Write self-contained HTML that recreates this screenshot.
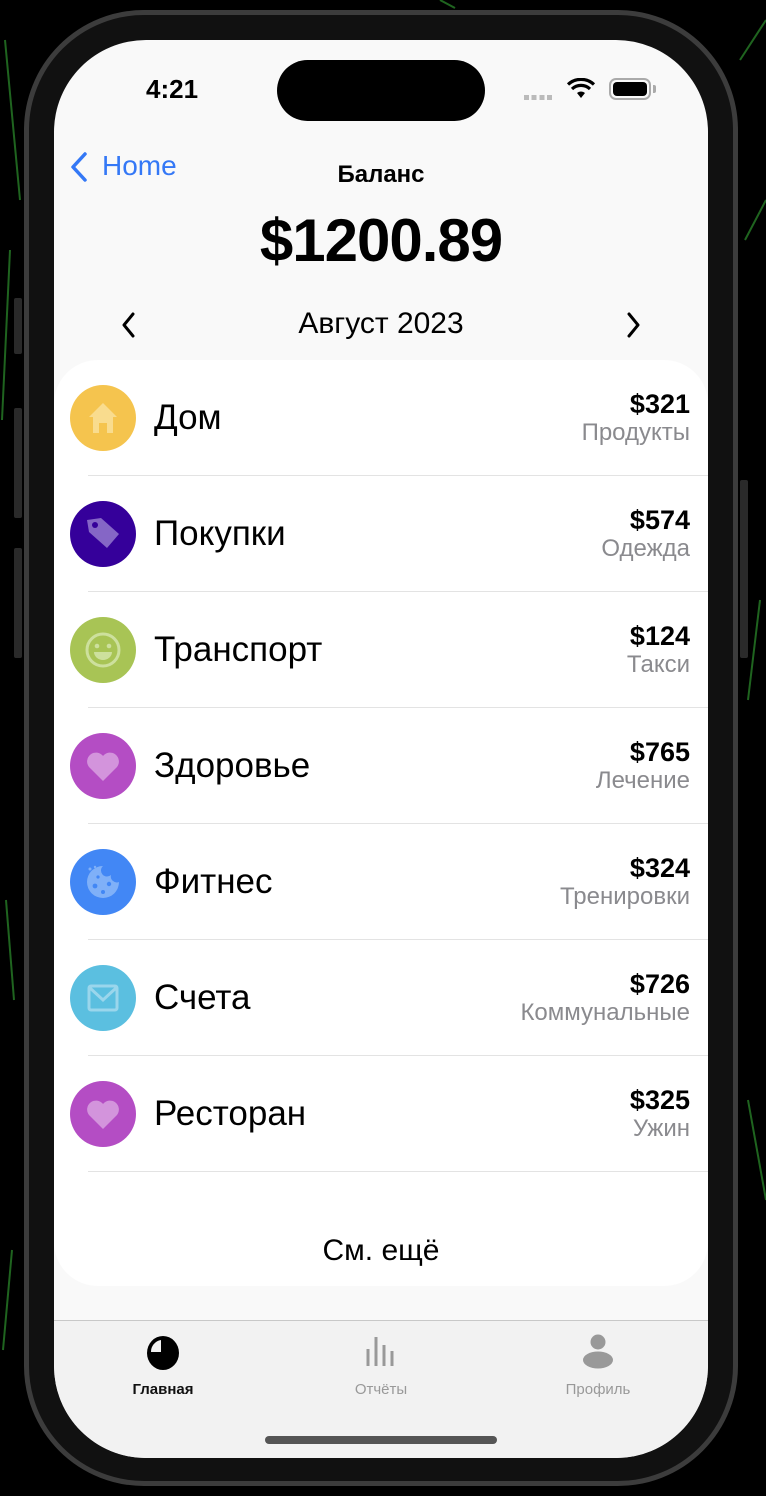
<!DOCTYPE html>
<html><head><meta charset="utf-8"><style>
*{margin:0;padding:0;box-sizing:border-box}
body{width:766px;height:1496px;background:#000;position:relative;overflow:hidden;font-family:"Liberation Sans","DejaVu Sans",sans-serif}
.phone{position:absolute;left:24px;top:10px;width:714px;height:1476px;border-radius:120px;background:#111;border:5px solid #3c3c3c}
.screen{position:absolute;left:54px;top:40px;width:654px;height:1418px;border-radius:92px;background:#f9f9f9;overflow:hidden}
.abs{position:absolute}
.card{position:absolute;left:0;top:320px;width:654px;height:926px;background:#fff;border-radius:44px}
.row{position:absolute;left:0;width:654px;height:116px}
.ic{position:absolute;left:16px;top:25px;width:66px;height:66px;border-radius:50%}
.ic svg{position:absolute;left:13px;top:13px}
.nm{position:absolute;left:100px;top:38px;font-size:35px;color:#000}
.am{position:absolute;right:18px;top:29px;font-size:27px;font-weight:bold;color:#000;text-align:right}
.sb{position:absolute;right:18px;top:59px;font-size:24px;color:#8a8a8e;text-align:right;white-space:nowrap}
.sep{position:absolute;left:34px;right:0;bottom:0;height:1px;background:#e3e3e3}
.tab{position:absolute;left:0;top:1280px;width:654px;height:140px;background:#f2f2f2;border-top:1px solid #c8c8c8}
.tl{position:absolute;font-size:15px;top:60px;width:160px;text-align:center}
.side{position:absolute;left:14px;width:8px;background:#2a2a2a;border-radius:2px}
</style></head><body>
<svg class="abs" style="left:0;top:0" width="766" height="1496">
<g stroke="#2d8f2d" stroke-width="2" opacity=".7">
<line x1="5" y1="40" x2="20" y2="200"/><line x1="10" y1="250" x2="2" y2="420"/><line x1="740" y1="60" x2="766" y2="20"/><line x1="745" y1="240" x2="766" y2="200"/><line x1="6" y1="900" x2="14" y2="1000"/><line x1="748" y1="1100" x2="766" y2="1200"/><line x1="3" y1="1350" x2="12" y2="1250"/><line x1="760" y1="600" x2="748" y2="700"/><line x1="440" y1="0" x2="455" y2="8"/>
</g></svg>
<div class="side" style="top:298px;height:56px"></div>
<div class="side" style="top:408px;height:110px"></div>
<div class="side" style="top:548px;height:110px"></div>
<div class="side" style="left:740px;top:480px;height:178px"></div>
<div class="phone"></div>
<div class="screen">
 <div class="abs" style="left:92px;top:34px;font-size:26px;font-weight:bold">4:21</div>
 <div class="abs" style="left:223px;top:20px;width:208px;height:61px;border-radius:31px;background:#000"></div>
 <div class="abs" style="left:470px;top:55px;width:28px;height:5px;background:repeating-linear-gradient(90deg,#bbb 0 5px,transparent 5px 7.7px)"></div>
 <svg class="abs" style="left:513px;top:38px" width="28" height="22" viewBox="0 0 28 22"><path d="M14 20 L10 15 A6 6 0 0 1 18 15Z" fill="#000"/><path d="M5 11 A13 13 0 0 1 23 11" stroke="#000" stroke-width="3.2" fill="none"/><path d="M1 6.5 A19 19 0 0 1 27 6.5" stroke="#000" stroke-width="3.2" fill="none"/></svg>
 <div class="abs" style="left:555px;top:38px;width:42px;height:22px;border:2px solid #aaa;border-radius:7px"><div style="position:absolute;left:2px;top:2px;right:2px;bottom:2px;background:#000;border-radius:4px"></div></div>
 <div class="abs" style="left:599px;top:45px;width:3px;height:8px;background:#aaa;border-radius:0 2px 2px 0"></div>
 <svg class="abs" style="left:14px;top:111px" width="22" height="32"><path d="M17 3 L5 16 L17 29" stroke="#3478f6" stroke-width="3.5" fill="none" stroke-linecap="round" stroke-linejoin="round"/></svg>
 <div class="abs" style="left:48px;top:110px;font-size:28px;color:#3478f6">Home</div>
 <div class="abs" style="left:0;width:654px;top:121px;text-align:center;font-size:24px;font-weight:bold">Баланс</div>
 <div class="abs" style="left:0;width:654px;top:166px;text-align:center;font-size:60px;font-weight:bold;letter-spacing:-1px">$1200.89</div>
 <svg class="abs" style="left:64px;top:270px" width="20" height="30"><path d="M15 4 L6 15 L15 26" stroke="#000" stroke-width="3" fill="none" stroke-linecap="round" stroke-linejoin="round"/></svg>
 <svg class="abs" style="left:570px;top:270px" width="20" height="30"><path d="M5 4 L14 15 L5 26" stroke="#000" stroke-width="3" fill="none" stroke-linecap="round" stroke-linejoin="round"/></svg>
 <div class="abs" style="left:0;width:654px;top:267px;text-align:center;font-size:30px">Август 2023</div>
 <div class="card">
  <div class="row" style="top:0"><div class="ic" style="background:#f5c44e"><svg width="40" height="40" viewBox="0 0 40 40"><path d="M20 5 L34 19 L30 19 L30 35 L24 35 L24 25 L16 25 L16 35 L10 35 L10 19 L6 19Z" fill="#f9dc8e"/></svg></div><div class="nm">Дом</div><div class="am">$321</div><div class="sb">Продукты</div><div class="sep"></div></div>
  <div class="row" style="top:116px"><div class="ic" style="background:#35009a"><svg width="40" height="40" viewBox="0 0 40 40"><path d="M4 6 L18 4 L36 20 L24 34 L6 18Z" fill="#8566c6"/><circle cx="12" cy="11" r="3" fill="#35009a"/></svg></div><div class="nm">Покупки</div><div class="am">$574</div><div class="sb">Одежда</div><div class="sep"></div></div>
  <div class="row" style="top:232px"><div class="ic" style="background:#a8c455"><svg width="40" height="40" viewBox="0 0 40 40"><circle cx="20" cy="20" r="16" stroke="#cde09d" stroke-width="3" fill="none"/><circle cx="14" cy="16" r="2.3" fill="#cde09d"/><circle cx="26" cy="16" r="2.3" fill="#cde09d"/><path d="M11 22 H29 A9 8 0 0 1 11 22Z" fill="#cde09d"/></svg></div><div class="nm">Транспорт</div><div class="am">$124</div><div class="sb">Такси</div><div class="sep"></div></div>
  <div class="row" style="top:348px"><div class="ic" style="background:#b44dc4"><svg width="40" height="40" viewBox="0 0 40 40"><path d="M20 35 L6 21 A8 8 0 0 1 20 10 A8 8 0 0 1 34 21Z" fill="#d394dc"/></svg></div><div class="nm">Здоровье</div><div class="am">$765</div><div class="sb">Лечение</div><div class="sep"></div></div>
  <div class="row" style="top:464px"><div class="ic" style="background:#4287f5"><svg width="40" height="40" viewBox="0 0 40 40"><path d="M20 4 A16 16 0 1 0 36 20 A6 6 0 0 1 28 13 A6 6 0 0 1 20 4Z" fill="#7fb0f8"/><circle cx="12" cy="24" r="2.4" fill="#4287f5"/><circle cx="20" cy="30" r="2" fill="#4287f5"/><circle cx="26" cy="22" r="2.2" fill="#4287f5"/><circle cx="15" cy="15" r="1.6" fill="#4287f5"/><circle cx="7" cy="7" r="1.5" fill="#7fb0f8"/><circle cx="12" cy="5" r="1.2" fill="#7fb0f8"/></svg></div><div class="nm">Фитнес</div><div class="am">$324</div><div class="sb">Тренировки</div><div class="sep"></div></div>
  <div class="row" style="top:580px"><div class="ic" style="background:#5bbfe0"><svg width="40" height="40" viewBox="0 0 40 40"><rect x="6" y="8" width="28" height="24" rx="2" stroke="#9ad6ec" stroke-width="3" fill="none"/><path d="M7 10 L20 22 L33 10" stroke="#9ad6ec" stroke-width="3" fill="none"/></svg></div><div class="nm">Счета</div><div class="am">$726</div><div class="sb">Коммунальные</div><div class="sep"></div></div>
  <div class="row" style="top:696px"><div class="ic" style="background:#b44dc4"><svg width="40" height="40" viewBox="0 0 40 40"><path d="M20 35 L6 21 A8 8 0 0 1 20 10 A8 8 0 0 1 34 21Z" fill="#d394dc"/></svg></div><div class="nm">Ресторан</div><div class="am">$325</div><div class="sb">Ужин</div><div class="sep"></div></div>
  <div class="abs" style="left:0;width:654px;top:874px;text-align:center;font-size:30px">См. ещё</div>
 </div>
 <div class="tab">
  <svg class="abs" style="left:92px;top:14px" width="34" height="36" viewBox="0 0 34 36"><ellipse cx="17" cy="18" rx="16" ry="17" fill="#000"/><path d="M15 5 L15 17 L5 17 A12 12 0 0 1 15 5Z" fill="#f2f2f2"/></svg>
  <div class="tl" style="left:29px;font-weight:bold;color:#111">Главная</div>
  <svg class="abs" style="left:310px;top:12px" width="34" height="34"><g stroke="#999" stroke-width="3"><line x1="4" y1="16" x2="4" y2="33"/><line x1="12" y1="4" x2="12" y2="33"/><line x1="20" y1="12" x2="20" y2="33"/><line x1="28" y1="18" x2="28" y2="33"/></g></svg>
  <div class="tl" style="left:247px;color:#999">Отчёты</div>
  <svg class="abs" style="left:527px;top:12px" width="34" height="36"><circle cx="17" cy="9" r="7.5" fill="#999"/><ellipse cx="17" cy="27" rx="15" ry="8.5" fill="#999"/></svg>
  <div class="tl" style="left:464px;color:#999">Профиль</div>
  <div class="abs" style="left:211px;top:115px;width:232px;height:8px;border-radius:4px;background:#555"></div>
 </div>
</div>
</body></html>
